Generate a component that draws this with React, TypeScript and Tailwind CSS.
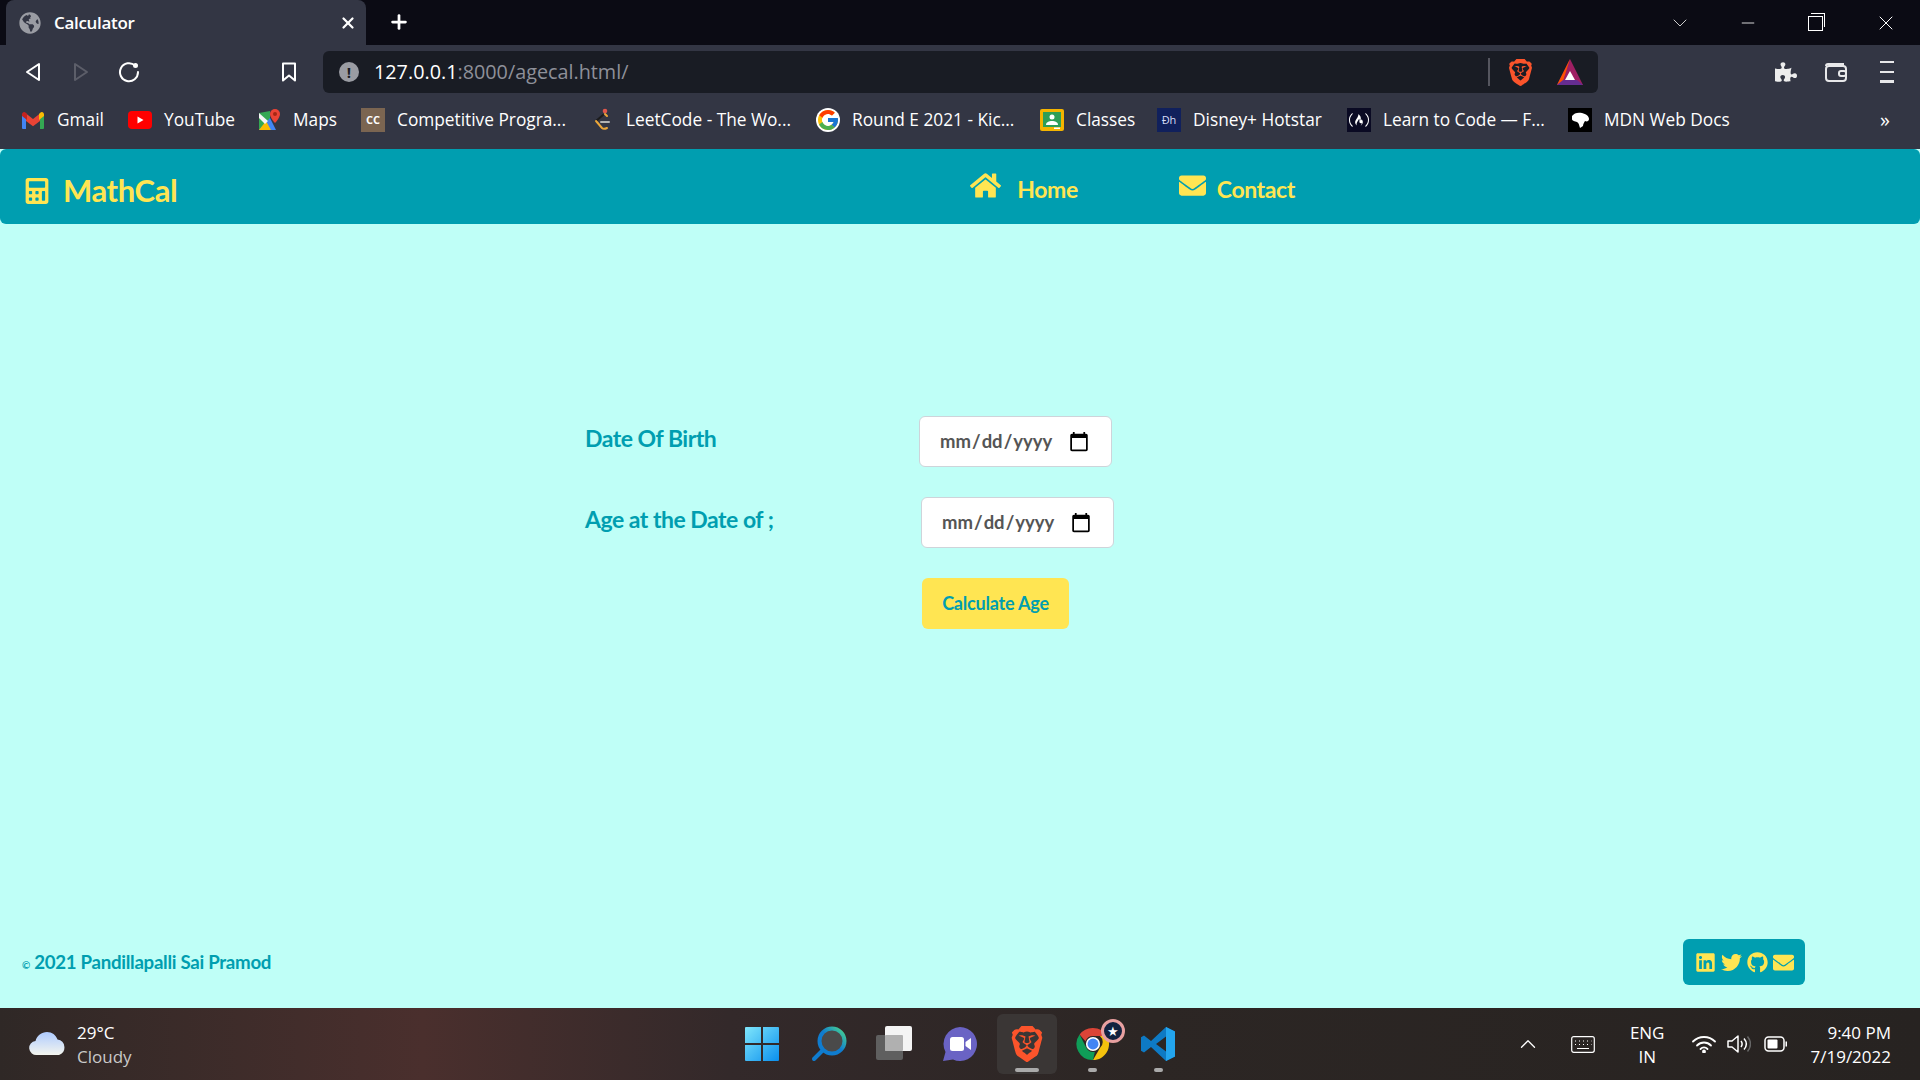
import { FaCalculator, FaEnvelope, FaGithub, FaHome, FaLinkedin, FaPuzzlePiece, FaTwitter, FaGlobeAmericas } from 'react-icons/fa';
import { FcGoogle } from 'react-icons/fc';
import { SiBrave, SiFreecodecamp } from 'react-icons/si';
import { ChevronDown, ChevronUp, Minus, X, Plus } from 'lucide-react';

function GmailIcon() {
  return (
    <svg viewBox="0 0 24 20" className="h-[20px] w-[24px]">
      <path d="M1 19V4l4 3v12H2a1 1 0 0 1-1-1z" fill="#4285f4" />
      <path d="M23 19V4l-4 3v12h3a1 1 0 0 0 1-1z" fill="#34a853" />
      <path d="M5 11V3.500L12 9l7-5.500V11l-7 5.200z" fill="#ea4335" />
      <path d="M1 4.500C1 2 3.500 1 5 3l1 1v6L1 6z" fill="#c5221f" />
      <path d="M23 4.500C23 2 20.500 1 19 3l-1 1v6l5-4z" fill="#fbbc04" />
    </svg>
  );
}

function YoutubeIcon() {
  return (
    <svg viewBox="0 0 24 18" className="h-[18px] w-[24px]">
      <rect width="24" height="18" rx="4" fill="#f00" />
      <path d="M9.500 5.500v7l6-3.500z" fill="#fff" />
    </svg>
  );
}

function MapsIcon() {
  return (
    <svg viewBox="0 0 24 24" className="h-[24px] w-[24px]">
      <path d="M2 5l11-2v19L2 22z" fill="#34a853" />
      <path d="M2 22L13 10l6 12z" fill="#4285f4" />
      <path d="M2 22l7-9 5 9z" fill="#fbbc04" />
      <path d="M2 5l9 8-3 3-6-6z" fill="#f5f5f5" />
      <path d="M18 1a5 5 0 0 1 5 5c0 4-5 9-5 9s-5-5-5-9a5 5 0 0 1 5-5z" fill="#ea4335" />
      <circle cx="18" cy="6" r="2" fill="#a52714" />
    </svg>
  );
}

function LeetcodeIcon() {
  return (
    <svg viewBox="0 0 24 24" className="h-[24px] w-[24px]" fill="none" strokeWidth="2" strokeLinecap="round">
      <circle cx="15" cy="3" r="2.300" fill="#e2574c" />
      <path d="M13 7L6 13" stroke="#1c1c1c" />
      <path d="M6 13l6 7c1 1 3 1 5 0" stroke="#eca73a" />
      <path d="M11 14h8" stroke="#b3b3b3" />
      <path d="M15 6l2 2" stroke="#eca73a" />
    </svg>
  );
}

function MdnIcon() {
  return (
    <svg viewBox="0 0 24 24" className="h-[24px] w-[24px]">
      <rect width="24" height="24" fill="#000" />
      <path d="M4 8c2-3 6-4 10-3 4 1 7 3 7 6 0 2-2 3-4 2-1 2-2 3-2 5l-3 2c-1-3-1-5-3-6-2-1-5-1-5-3z" fill="#fff" />
    </svg>
  );
}

function ClassroomIcon() {
  return (
    <svg viewBox="0 0 24 22" className="h-[22px] w-[24px]">
      <rect width="24" height="22" rx="2" fill="#f4b400" />
      <rect x="3" y="3" width="18" height="15" fill="#2e9e57" />
      <circle cx="12" cy="8" r="2.500" fill="#fff" />
      <path d="M6 16c0-3 3-4 6-4s6 1 6 4z" fill="#fff" />
      <rect x="14" y="18.500" width="6" height="1.500" fill="#fff" />
    </svg>
  );
}

function BatIcon() {
  return (
    <svg viewBox="0 0 28 28" className="h-[28px] w-[28px]">
      <path d="M14 1L1 27h26z" fill="#9e1f63" />
      <path d="M14 1L1 27l6-4z" fill="#ff5000" />
      <path d="M1 27l6-5h14l6 5z" fill="#662d91" />
      <path d="M14 13l-5 9h10z" fill="#fff" />
    </svg>
  );
}

function WalletIcon() {
  return (
    <svg viewBox="0 0 24 24" className="h-[24px] w-[24px]" fill="none" stroke="#e8e8ea" strokeWidth="2">
      <path d="M2 6a2 2 0 0 1 2-2h15v3" />
      <rect x="2" y="6" width="20" height="15" rx="3" />
      <rect x="15" y="11" width="7" height="5" rx="2" />
    </svg>
  );
}

function CloudIcon() {
  return (
    <svg viewBox="0 0 38 24" className="h-[24px] w-[38px]">
      <defs>
        <linearGradient id="cloudFill" x1="0" y1="0" x2="0" y2="1">
          <stop offset="0" stopColor="#aecbff" />
          <stop offset="1" stopColor="#f4f5ee" />
        </linearGradient>
      </defs>
      <path
        d="M8 23a7 7 0 0 1-1.500-14C8 3.500 12.500 0 18 0c5 0 9 3 10.500 7.500A8 8 0 0 1 30 23z"
        fill="url(#cloudFill)"
      />
    </svg>
  );
}

function WindowsIcon() {
  return (
    <svg viewBox="0 0 36 36" className="h-[36px] w-[36px]">
      <defs>
        <linearGradient id="winFill" x1="0" y1="0" x2="1" y2="1">
          <stop offset="0" stopColor="#7fe6fb" />
          <stop offset="1" stopColor="#0a8fee" />
        </linearGradient>
      </defs>
      <path d="M1 2a1 1 0 0 1 1-1h15v16H1zM19 1h15a1 1 0 0 1 1 1v15H19zM1 19h16v16H2a1 1 0 0 1-1-1zM19 19h16v15a1 1 0 0 1-1 1H19z" fill="url(#winFill)" />
    </svg>
  );
}

function SearchIcon() {
  return (
    <svg viewBox="0 0 36 36" className="h-[36px] w-[36px]">
      <defs>
        <linearGradient id="searchRing" x1="0" y1="1" x2="1" y2="0">
          <stop offset="0.5" stopColor="#0f7ccf" />
          <stop offset="1" stopColor="#4bd98b" />
        </linearGradient>
      </defs>
      <circle cx="21" cy="15" r="12.500" fill="#4a4a4a" stroke="url(#searchRing)" strokeWidth="4" />
      <path d="M11 25l-8 8" stroke="#0f7ccf" strokeWidth="4" strokeLinecap="round" />
    </svg>
  );
}

function TaskViewIcon() {
  return (
    <svg viewBox="0 0 36 36" className="h-[36px] w-[36px]">
      <rect x="0" y="9" width="27" height="25" rx="2" fill="#5f5f5f" />
      <rect x="9" y="0" width="27" height="25" rx="2" fill="#f4f4f4" />
      <rect x="9" y="9" width="18" height="16" rx="1" fill="#b0b0b0" />
    </svg>
  );
}

function ChatIcon() {
  return (
    <svg viewBox="0 0 36 36" className="h-[36px] w-[36px]">
      <path d="M18 1a17 17 0 1 1-7 32.500L1 35l2.500-9A17 17 0 0 1 18 1z" fill="#6a63c4" />
      <rect x="8" y="11" width="14" height="14" rx="2.500" fill="#fff" />
      <path d="M23.500 16l5.500-4v12l-5.500-4z" fill="#fff" />
    </svg>
  );
}

function ChromeIcon() {
  return (
    <svg viewBox="0 0 36 36" className="h-[34px] w-[34px]">
      <path d="M18 1a17 17 0 0 1 14.700 8.500H18a8.500 8.500 0 0 0-8 5.600L3.800 8A17 17 0 0 1 18 1z" fill="#db4437" />
      <path d="M32.700 9.500A17 17 0 0 1 18 35l7.400-12.700a8.500 8.500 0 0 0 0-12.800z" fill="#f4c20d" />
      <path d="M18 35A17 17 0 0 1 3.800 8l7.200 14.300a8.500 8.500 0 0 0 9 4z" fill="#0f9d58" />
      <circle cx="18" cy="18" r="7.500" fill="#fff" />
      <circle cx="18" cy="18" r="5.800" fill="#4285f4" />
    </svg>
  );
}

function VscodeIcon() {
  return (
    <svg viewBox="0 0 36 36" className="h-[36px] w-[36px]">
      <path d="M26 1l9 4.500v25L26 35 11 21l-7 5.500-3-1.800v-13.400l3-1.800 7 5.500z" fill="#0e7ac4" />
      <path d="M26 1l9 4.500v25L26 35z" fill="#23a5ee" />
      <path d="M26 10.500v15L16 18z" fill="#2b2624" />
    </svg>
  );
}

function WifiIcon() {
  return (
    <svg viewBox="0 0 24 18" className="h-[18px] w-[24px]" fill="none" stroke="#fff" strokeWidth="1.800" strokeLinecap="round">
      <path d="M1 6.500c6-6 16-6 22 0" />
      <path d="M5 10.500c4-4 10-4 14 0" />
      <path d="M8.500 14c2-2 5-2 7 0" />
      <circle cx="12" cy="16.500" r="1" fill="#fff" />
    </svg>
  );
}

function SpeakerIcon() {
  return (
    <svg viewBox="0 0 24 18" className="h-[18px] w-[24px]" fill="none" stroke="#fff" strokeWidth="1.500" strokeLinejoin="round">
      <path d="M1 6h4l6-5v16l-6-5H1z" />
      <path d="M14 6c1.500 2 1.500 4 0 6" />
      <path d="M17 3.500c3 3.500 3 7.500 0 11" />
      <path d="M20.500 1.500c4 5 4 10 0 15" stroke="#666" />
    </svg>
  );
}

function BatteryIcon() {
  return (
    <svg viewBox="0 0 24 16" className="h-[16px] w-[24px]" fill="none">
      <rect x="1" y="1" width="19" height="14" rx="3.500" stroke="#fff" strokeWidth="1.500" />
      <rect x="3.500" y="3.500" width="10" height="9" rx="1" fill="#fff" />
      <path d="M21.500 5.500H23v5h-1.500z" fill="#fff" />
    </svg>
  );
}

function KeyboardIcon() {
  return (
    <svg viewBox="0 0 24 17" className="h-[17px] w-[24px]" fill="none" stroke="#fff" strokeWidth="1.200">
      <rect x="0.700" y="0.700" width="22.600" height="15.600" rx="2" />
      <path d="M4 5h1M8 5h1M12 5h1M16 5h1M20 5h.5M4 8.500h1M8 8.500h1M12 8.500h1M16 8.500h1M20 8.500h.5M6 12.500h12" />
    </svg>
  );
}

const BOOKMARKS = [
  { label: 'Gmail', icon: <GmailIcon />, width: 'w-[47px]' },
  { label: 'YouTube', icon: <YoutubeIcon />, width: 'w-[69px]' },
  { label: 'Maps', icon: <MapsIcon />, width: 'w-[44px]' },
  {
    label: 'Competitive Progra...',
    icon: (
      <span className="flex h-[24px] w-[24px] items-center justify-center border-[3px] border-[#7b6551] bg-[#7b6551] text-[11px] font-bold text-white">
        CC
      </span>
    ),
    width: 'w-[169px]',
  },
  { label: 'LeetCode - The Wo...', icon: <LeetcodeIcon />, width: 'w-[166px]' },
  { label: 'Round E 2021 - Kic...', icon: <FcGoogle className="rounded-full bg-white text-[24px]" />, width: 'w-[164px]' },
  { label: 'Classes', icon: <ClassroomIcon />, width: 'w-[57px]' },
  {
    label: 'Disney+ Hotstar',
    icon: (
      <span className="flex h-[24px] w-[24px] items-center justify-center bg-[#10205c] text-[11px] text-[#d5dcf5]">Đh</span>
    ),
    width: 'w-[130px]',
  },
  {
    label: 'Learn to Code — F...',
    icon: (
      <span className="flex h-[24px] w-[24px] items-center justify-center bg-[#0a0a23] text-white">
        <SiFreecodecamp className="text-[20px]" />
      </span>
    ),
    width: 'w-[161px]',
  },
  { label: 'MDN Web Docs', icon: <MdnIcon />, width: 'w-[127px]' },
];

function BrowserChrome() {
  return (
    <header className="font-['Open_Sans',sans-serif] text-white">
      <div className="flex h-[45px] bg-[#0b0b14] pl-[6px]">
        <div className="flex h-[45px] w-[360px] items-center rounded-t-[8px] bg-[#333644] pl-[13px]">
          <FaGlobeAmericas className="text-[22px] text-[#9a9ca3]" />
          <span className="ml-[13px] text-[17px] font-semibold tracking-[-0.3px]">Calculator</span>
          <X className="ml-auto mr-[9px] h-[18px] w-[18px]" strokeWidth={3} />
        </div>
        <Plus className="ml-[22px] mt-[11px] h-[22px] w-[22px]" strokeWidth={3} />
        <div className="ml-auto flex text-white">
          <span className="flex h-[45px] w-[68px] items-center justify-center">
            <ChevronDown className="h-[24px] w-[24px] text-[#ccc]" strokeWidth={1} />
          </span>
          <span className="flex h-[45px] w-[68px] items-center justify-center">
            <Minus className="h-[20px] w-[20px]" strokeWidth={1} />
          </span>
          <span className="flex h-[45px] w-[69px] items-center justify-center">
            <span className="relative block h-[15px] w-[15px] translate-x-[-1px] translate-y-[1px] border border-white">
              <span className="absolute left-[2px] top-[-4px] h-[14px] w-[14px] border-r border-t border-white" />
            </span>
          </span>
          <span className="flex h-[45px] w-[69px] items-center justify-center">
            <X className="h-[24px] w-[24px]" strokeWidth={1} />
          </span>
        </div>
      </div>

      <div className="flex h-[48px] items-end bg-[#333644] pl-[9px]">
        <div className="flex h-[42px] items-center">
          <span className="flex w-[48px] justify-center">
            <svg viewBox="0 0 16 20" className="h-[20px] w-[16px]" fill="none" stroke="#fff" strokeWidth="2" strokeLinejoin="round">
              <path d="M14 2v16L2 10z" />
            </svg>
          </span>
          <span className="flex w-[48px] justify-center">
            <svg viewBox="0 0 16 20" className="h-[20px] w-[16px]" fill="none" stroke="#5c5e69" strokeWidth="2" strokeLinejoin="round">
              <path d="M2 2v16l12-8z" />
            </svg>
          </span>
          <span className="flex w-[48px] justify-center">
            <svg viewBox="0 0 22 22" className="h-[22px] w-[22px]" fill="none" stroke="#fff" strokeWidth="2" strokeLinecap="round">
              <path d="M17 4.500A9 9 0 1 0 20 11" />
              <circle cx="17.500" cy="4.500" r="2.500" fill="#fff" stroke="none" />
            </svg>
          </span>
          <span className="ml-[112px] flex w-[48px] justify-center">
            <svg viewBox="0 0 16 20" className="h-[20px] w-[16px]" fill="none" stroke="#fff" strokeWidth="2" strokeLinejoin="round">
              <path d="M2 1.500h12v17l-6-5-6 5z" />
            </svg>
          </span>
        </div>
        <div className="ml-[10px] flex h-[42px] w-[1275px] items-center rounded-[6px] bg-[#191c24] pl-[16px]">
          <span className="flex h-[20px] w-[20px] items-center justify-center rounded-full bg-[#9a9ca3] text-[15px] font-bold leading-none text-[#191c24]">
            !
          </span>
          <span className="ml-[15px] text-[19.800px]">
            127.0.0.1<span className="text-[#8e9099]">:8000/agecal.html/</span>
          </span>
          <span className="ml-auto mr-[2px] h-[28px] w-[2px] bg-[#55565f]" />
          <SiBrave className="ml-[15px] text-[27px] text-[#fb542b]" />
          <span className="ml-[22px] mr-[14px] flex">
            <BatIcon />
          </span>
        </div>
        <div className="flex h-[42px] items-center pl-[177px]">
          <FaPuzzlePiece className="text-[22px] text-[#ededed]" />
          <span className="ml-[27px]">
            <WalletIcon />
          </span>
          <span className="ml-[32px] flex h-[22px] w-[14px] flex-col justify-between">
            <span className="h-[2px] bg-[#e8e8ea]" />
            <span className="h-[2px] bg-[#e8e8ea]" />
            <span className="h-[3px] bg-[#e8e8ea]" />
          </span>
        </div>
      </div>

      <div className="flex h-[56px] items-center gap-[24px] bg-[#333644] pb-[2px] pl-[21px] text-[17.300px] text-white">
        {BOOKMARKS.map((b) => (
          <div key={b.label} className="flex items-center gap-[12px]">
            <span className="flex w-[24px] justify-center">{b.icon}</span>
            <span className={`${b.width} whitespace-nowrap`}>{b.label}</span>
          </div>
        ))}
        <span className="ml-auto mr-[30px] text-[20px] leading-none">»</span>
      </div>
    </header>
  );
}

function DateRow({ label, inputClass }: { label: string; inputClass: string }) {
  return (
    <div className="flex items-start">
      <label className="mt-[6px] w-[334px] text-[23px] font-bold leading-[32px] tracking-[-0.5px] text-[#009eb0]">{label}</label>
      <input
        type="date"
        className={`${inputClass} h-[51px] w-[193px] rounded-[6px] border border-[#ced4da] bg-white px-[19px] text-[18.500px] font-bold text-[#555] [&::-webkit-calendar-picker-indicator]:m-0 [&::-webkit-calendar-picker-indicator]:h-[22px] [&::-webkit-calendar-picker-indicator]:w-[22px]`}
      />
    </div>
  );
}

function Navbar() {
  return (
    <nav className="flex h-[75px] items-center rounded-[6px] bg-[#009eb0] pl-[24px] font-bold text-[#ffe552]">
      <FaCalculator className="mt-[8px] text-[26px]" />
      <span className="ml-[13px] mt-[8px] text-[31px] leading-none tracking-[-0.4px]">MathCal</span>
      <FaHome className="ml-[793px] mb-[2px] text-[31px]" />
      <span className="ml-[16px] mt-[5px] text-[23px] tracking-[-0.4px]">Home</span>
      <FaEnvelope className="ml-[101px] mb-[2px] text-[27px]" />
      <span className="ml-[11px] mt-[5px] text-[23px] tracking-[-0.4px]">Contact</span>
    </nav>
  );
}

function Taskbar() {
  return (
    <footer className="flex h-[72px] items-center bg-[linear-gradient(90deg,#2f2826_0%,#4a2f2d_22%,#33292a_38%,#2c2624_60%,#272321_100%)] font-['Open_Sans',sans-serif] text-white">
      <div className="flex w-[744px] items-center pl-[29px]">
        <CloudIcon />
        <div className="ml-[10px] mt-[2px] text-[17px] leading-[24px]">
          <p>29°C</p>
          <p className="text-[#c9c9c9]">Cloudy</p>
        </div>
      </div>

      <div className="flex items-center">
        <WindowsIcon />
        <span className="ml-[31px] flex">
          <SearchIcon />
        </span>
        <span className="ml-[29px] flex">
          <TaskViewIcon />
        </span>
        <span className="ml-[30px] flex">
          <ChatIcon />
        </span>
        <div className="relative ml-[19px] flex h-[60px] w-[60px] items-center justify-center rounded-[6px] bg-[#3a3635]">
          <SiBrave className="text-[36px] text-[#fb542b]" />
          <span className="absolute bottom-[2px] left-[18px] h-[4px] w-[24px] rounded-full bg-[#aaa]" />
        </div>
        <div className="relative ml-[19px] flex h-[60px] w-[34px] items-center">
          <ChromeIcon />
          <span className="absolute right-[-15px] top-[5px] flex h-[24px] w-[24px] items-center justify-center rounded-full border-[3px] border-[#e8a0a0] bg-[#12223f] text-[13px] leading-none text-white">
            ★
          </span>
          <span className="absolute bottom-[2px] left-[12px] h-[4px] w-[9px] rounded-full bg-[#aaa]" />
        </div>
        <div className="relative ml-[30px] flex h-[60px] w-[36px] items-center">
          <VscodeIcon />
          <span className="absolute bottom-[2px] left-[14px] h-[4px] w-[9px] rounded-full bg-[#aaa]" />
        </div>
      </div>

      <div className="ml-auto flex items-center pr-[29px] text-[17px] leading-[24px]">
        <ChevronUp className="h-[26px] w-[26px]" strokeWidth={1.2} />
        <span className="ml-[30px] flex">
          <KeyboardIcon />
        </span>
        <div className="ml-[35px] mt-[1px] text-center">
          <p>ENG</p>
          <p>IN</p>
        </div>
        <span className="ml-[28px] flex">
          <WifiIcon />
        </span>
        <span className="ml-[11px] flex">
          <SpeakerIcon />
        </span>
        <span className="ml-[13px] flex">
          <BatteryIcon />
        </span>
        <div className="ml-[22px] mt-[1px] text-right">
          <p>9:40 PM</p>
          <p>7/19/2022</p>
        </div>
      </div>
    </footer>
  );
}

export default function App() {
  return (
    <div className="flex h-[1080px] flex-col overflow-hidden bg-[#bffff7] font-[Lato,sans-serif]">
      <BrowserChrome />
      <Navbar />
      <main className="flex flex-1 flex-col">
        <form className="flex flex-col gap-[30px] pl-[585px] pt-[192px]" onSubmit={(e) => e.preventDefault()}>
          <DateRow label="Date Of Birth" inputClass="" />
          <DateRow label="Age at the Date of ;" inputClass="ml-[2px]" />
          <button
            type="submit"
            className="ml-[337px] h-[51px] w-[147px] rounded-[6px] bg-[#ffe552] text-[18px] font-bold tracking-[-0.2px] text-[#009eb0]"
          >
            Calculate Age
          </button>
        </form>
        <div className="mt-auto flex items-center justify-between pb-[23px] pl-[22px] pr-[115px] text-[#009eb0]">
          <p className="text-[18.700px] font-bold tracking-[-0.3px]">
            <span className="text-[10px]">©</span> 2021 Pandillapalli Sai Pramod
          </p>
          <div className="flex h-[46px] w-[122px] items-center justify-center gap-[5px] rounded-[6px] bg-[#009eb0] text-[21px] text-[#ffe552]">
            <FaLinkedin />
            <FaTwitter />
            <FaGithub />
            <FaEnvelope />
          </div>
        </div>
      </main>
      <Taskbar />
    </div>
  );
}
